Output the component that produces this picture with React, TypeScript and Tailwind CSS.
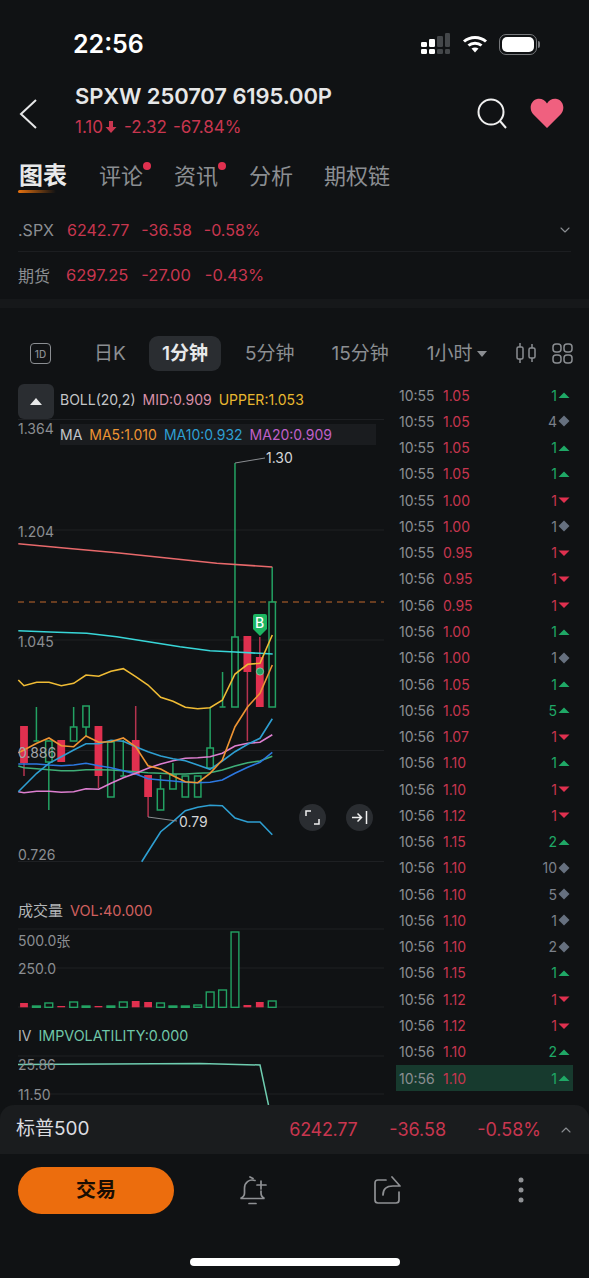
import { ChevronDown, ChevronUp } from "lucide-react";

const RED = "#e0304f";
const GREEN = "#23a263";

// x is the bar slot, the rest are y values on the page
const candles = [
  { up: false, top: 726, bottom: 763, high: 726, low: 776 },
  { up: true, top: 741, bottom: 741, high: 707, low: 741 },
  { up: true, top: 741, bottom: 762, high: 741, low: 810 },
  { up: false, top: 740, bottom: 762, high: 740, low: 762 },
  { up: true, top: 727, bottom: 741, high: 707, low: 741 },
  { up: true, top: 706, bottom: 727, high: 706, low: 736 },
  { up: false, top: 726, bottom: 776, high: 726, low: 788 },
  { up: true, top: 742, bottom: 797, high: 742, low: 797 },
  { up: true, top: 776, bottom: 776, high: 740, low: 776 },
  { up: false, top: 740, bottom: 775, high: 706, low: 775 },
  { up: false, top: 775, bottom: 797, high: 775, low: 817 },
  { up: true, top: 789, bottom: 810, high: 775, low: 810 },
  { up: true, top: 775, bottom: 789, high: 763, low: 789 },
  { up: true, top: 776, bottom: 797, high: 776, low: 797 },
  { up: true, top: 776, bottom: 797, high: 776, low: 797 },
  { up: true, top: 748, bottom: 768, high: 707, low: 768 },
  { up: true, top: 707, bottom: 707, high: 672, low: 707 },
  { up: true, top: 637, bottom: 707, high: 463, low: 707 },
  { up: false, top: 636, bottom: 672, high: 636, low: 741 },
  { up: false, top: 657, bottom: 707, high: 637, low: 707 },
  { up: true, top: 602, bottom: 707, high: 567, low: 707 },
];

const slotX = (i: number) => 24 + i * 12.41;

const volumes = [
  [1003, false], [1006, true], [1003, true], [1006, false], [1002, true], [1006, true], [1006, false],
  [1006, true], [1002, true], [1001, false], [1002, false], [1003, true], [1006, true], [1006, true],
  [1005, true], [992, true], [990, true], [932, true], [1005, false], [1002, false], [1001, true],
] as [number, boolean][];

const line = (pts: number[][], ox = 600) => pts.map(([x, y]) => `${(x / 3).toFixed(1)},${(ox + y / 3).toFixed(1)}`).join(" ");

const cyan = [[55, 92], [150, 96], [260, 100], [350, 110], [450, 126], [540, 140], [630, 152], [705, 156], [780, 160], [818, 162]];
const yellow = [[55, 240], [72, 257], [110, 247], [147, 247], [184, 257], [221, 250], [258, 225], [296, 229], [333, 214], [370, 206], [407, 230], [444, 255], [482, 292], [519, 304], [556, 322], [593, 326], [630, 323], [667, 301], [705, 222], [743, 193], [780, 190], [817, 105]];
const orange = [[55, 458], [72, 450], [110, 430], [147, 414], [184, 437], [221, 440], [258, 408], [296, 427], [333, 425], [370, 414], [407, 440], [444, 497], [482, 507], [519, 527], [556, 545], [593, 548], [630, 520], [667, 480], [705, 380], [743, 320], [780, 280], [817, 195]];
const sky = [[55, 575], [110, 520], [147, 490], [184, 470], [221, 450], [258, 431], [296, 431], [333, 421], [370, 424], [407, 440], [444, 455], [482, 468], [519, 476], [556, 482], [593, 495], [630, 508], [667, 483], [705, 455], [743, 433], [780, 415], [817, 356]];
const pink = [[55, 575], [72, 578], [110, 574], [147, 574], [184, 577], [221, 575], [258, 566], [296, 568], [333, 550], [370, 533], [407, 520], [444, 505], [482, 492], [519, 482], [556, 475], [593, 473], [630, 470], [667, 460], [705, 438], [743, 430], [780, 427], [817, 404]];
const blue = [[55, 492], [110, 492], [147, 495], [184, 497], [221, 495], [258, 490], [296, 497], [333, 503], [370, 512], [407, 522], [444, 536], [482, 540], [519, 543], [556, 547], [593, 548], [630, 547], [667, 540], [705, 520], [743, 502], [780, 487], [817, 457]];
const green = [[55, 498], [72, 503], [110, 506], [147, 509], [184, 512], [221, 512], [258, 509], [296, 509], [333, 510], [370, 512], [407, 515], [444, 518], [482, 520], [519, 522], [556, 522], [593, 520], [630, 518], [667, 510], [705, 498], [743, 488], [780, 483], [817, 469]];
const lower = [[425, 785], [444, 755], [482, 695], [519, 665], [556, 632], [593, 622], [630, 616], [667, 617], [705, 654], [743, 666], [780, 666], [817, 704]];
const upper = [[55, 671], [200, 685], [350, 698], [500, 714], [650, 730], [817, 741]];

const ticks: [string, string, number, "up" | "down" | "flat"][] = [
  ["10:55", "1.05", 1, "up"],
  ["10:55", "1.05", 4, "flat"],
  ["10:55", "1.05", 1, "up"],
  ["10:55", "1.05", 1, "up"],
  ["10:55", "1.00", 1, "down"],
  ["10:55", "1.00", 1, "flat"],
  ["10:55", "0.95", 1, "down"],
  ["10:56", "0.95", 1, "down"],
  ["10:56", "0.95", 1, "down"],
  ["10:56", "1.00", 1, "up"],
  ["10:56", "1.00", 1, "flat"],
  ["10:56", "1.05", 1, "up"],
  ["10:56", "1.05", 5, "up"],
  ["10:56", "1.07", 1, "down"],
  ["10:56", "1.10", 1, "up"],
  ["10:56", "1.10", 1, "down"],
  ["10:56", "1.12", 1, "down"],
  ["10:56", "1.15", 2, "up"],
  ["10:56", "1.10", 10, "flat"],
  ["10:56", "1.10", 5, "flat"],
  ["10:56", "1.10", 1, "flat"],
  ["10:56", "1.10", 2, "flat"],
  ["10:56", "1.15", 1, "up"],
  ["10:56", "1.12", 1, "down"],
  ["10:56", "1.12", 1, "down"],
  ["10:56", "1.10", 2, "up"],
  ["10:56", "1.10", 1, "up"],
];

function TickMark({ dir }: { dir: "up" | "down" | "flat" }) {
  return (
    <svg width="12" height="12" viewBox="0 0 12 12" className="ml-[1px] shrink-0">
      {dir === "up" && <path d="M0.5 9 L6 3.5 L11.5 9 Z" fill="#1fa866" />}
      {dir === "down" && <path d="M0.5 3.5 L6 9 L11.5 3.5 Z" fill={RED} />}
      {dir === "flat" && <path d="M6 0.5 L11.5 6 L6 11.5 L0.5 6 Z" fill="#66707f" />}
    </svg>
  );
}

function Chart() {
  const gridY = [419.5, 530, 640, 750.5, 861.5, 929, 968, 1007, 1056, 1094];
  return (
    <svg viewBox="0 384 395 721" className="absolute inset-0 h-full w-full" fill="none">
      {gridY.map((y) => (
        <line key={y} x1="18" x2="384" y1={y} y2={y} stroke="#1e2023" strokeWidth="1" />
      ))}
      <line x1="18" x2="384" y1="602" y2="602" stroke="#c2682c" strokeWidth="1.2" strokeDasharray="6 5" />

      {candles.map((c, i) => {
        const x = slotX(i);
        const isLine = c.top === c.bottom;
        return (
          <g key={i}>
            <line x1={x} x2={x} y1={c.high} y2={c.low} stroke={c.up ? GREEN : "#b5334f"} strokeWidth="1.5" />
            {isLine ? (
              <line x1={x - 3} x2={x + 3} y1={c.bottom} y2={c.bottom} stroke={GREEN} strokeWidth="1.5" />
            ) : c.up ? (
              <rect x={x - 3.2} y={c.top} width="6.4" height={c.bottom - c.top} fill="#101214" stroke={GREEN} strokeWidth="1.5" />
            ) : (
              <rect x={x - 3.9} y={c.top} width="7.8" height={c.bottom - c.top} fill={RED} />
            )}
          </g>
        );
      })}

      <polyline points={line(upper, 320)} stroke="#e8696b" strokeWidth="1.6" />
      <polyline points={line(cyan)} stroke="#38d6d8" strokeWidth="1.6" />
      <polyline points={line(yellow)} stroke="#f0bc35" strokeWidth="1.6" />
      <polyline points={line(green)} stroke="#3fae78" strokeWidth="1.6" />
      <polyline points={line(blue)} stroke="#2c78e0" strokeWidth="1.6" />
      <polyline points={line(pink)} stroke="#dd7fd0" strokeWidth="1.6" />
      <polyline points={line(sky)} stroke="#2e9fd2" strokeWidth="1.6" />
      <polyline points={line(orange)} stroke="#ee9433" strokeWidth="1.6" />
      <polyline points={line(lower)} stroke="#2e9fd2" strokeWidth="1.6" />

      {/* high / low leaders */}
      <polyline points="235,463 265,458" stroke="#8a8d91" strokeWidth="1" />
      <polyline points="148,817 177,821" stroke="#8a8d91" strokeWidth="1" />

      {/* buy marker */}
      <path d="M255 614 H265 Q267 614 267 616 V629 L260 636 L253 629 V616 Q253 614 255 614 Z" fill="#1db562" />
      <circle cx="260" cy="671.5" r="3.6" fill={GREEN} stroke="#7fd6a8" strokeWidth="0.8" />

      {/* volume */}
      {volumes.map(([top, up], i) => {
        const x = slotX(i);
        return up ? (
          <rect key={i} x={x - 3.9} y={top} width="7.8" height={1007.3 - top} fill="#101214" stroke={GREEN} strokeWidth="1.4" />
        ) : (
          <rect key={i} x={x - 3.9} y={top} width="7.8" height={1007.3 - top} fill={RED} />
        );
      })}

      {/* iv */}
      <polyline points="18,1064.500 110,1064 200,1063.500 260,1065 268.500,1105" stroke="#6fcdb0" strokeWidth="1.5" />
    </svg>
  );
}

export default function App() {
  return (
    <div className="flex h-[1278px] w-[589px] flex-col overflow-hidden bg-[#101214] font-['Inter','Noto_Sans_CJK_SC',sans-serif] text-[#8b8e92]">
      {/* Status bar */}
      <div className="flex h-[72px] items-center justify-between pl-[73px] pr-[49px] pt-[16px]">
        <span className="text-[25px] font-semibold leading-none text-white">22:56</span>
        <div className="flex items-center gap-[11px]">
          <svg width="30" height="22" viewBox="0 0 30 22">
            <rect x="0" y="9" width="6" height="5" rx="1.2" fill="#fff" />
            <rect x="0" y="16" width="6" height="5" rx="1.2" fill="#fff" />
            <rect x="8" y="6" width="6" height="8" rx="1.2" fill="#fff" />
            <rect x="8" y="16" width="6" height="5" rx="1.2" fill="#fff" />
            <rect x="16" y="3" width="6" height="11" rx="1.2" fill="#44474a" />
            <rect x="16" y="16" width="6" height="5" rx="1.2" fill="#44474a" />
            <rect x="24" y="0" width="5" height="14" rx="1.2" fill="#44474a" />
            <rect x="24" y="16" width="5" height="5" rx="1.2" fill="#44474a" />
          </svg>
          <svg width="26" height="20" viewBox="0 0 26 20" fill="none" stroke="#fff" strokeWidth="3">
            <path d="M2 7.5 C8 2 18 2 24 7.5" />
            <path d="M6.5 11.5 C10 8.4 16 8.4 19.5 11.5" />
            <path d="M13 18.5 L9.5 14.6 C11.5 13.2 14.5 13.2 16.5 14.6 Z" fill="#fff" stroke="none" />
          </svg>
          <div className="flex items-center">
            <div className="h-[21px] w-[38px] rounded-[7px] border border-[#77797c] p-[2px]">
              <div className="h-full w-full rounded-[5px] bg-white" />
            </div>
            <div className="ml-[1px] h-[7px] w-[2px] rounded-r bg-[#77797c]" />
          </div>
        </div>
      </div>

      {/* Header */}
      <div className="flex h-[80px] items-center pl-[19px] pr-[25px]">
        <svg width="18" height="30" viewBox="0 0 18 30" fill="none" stroke="#e6e7e8" strokeWidth="2" className="mt-[3px]">
          <path d="M17 1 L2 15 L17 29" />
        </svg>
        <div className="ml-[38px] flex flex-1 flex-col gap-[10px] self-start pt-[12px]">
          <span className="text-[22px] font-semibold leading-[24px] tracking-[-0.1px] text-[#e6e7e8]">SPXW 250707 6195.00P</span>
          <div className="flex items-center text-[17px] leading-[18px] text-[#c8364f]">
            <span>1.10</span>
            <svg width="12" height="14" viewBox="0 0 12 14" className="ml-[2px] mr-[7px]">
              <path d="M4 1 H8 V7 H11.5 L6 13 L0.5 7 H4 Z" fill="#c8364f" />
            </svg>
            <span className="mr-[6px]">-2.32</span>
            <span>-67.84%</span>
          </div>
        </div>
        <svg width="30" height="32" viewBox="0 0 30 32" fill="none" stroke="#f0f0f0" strokeWidth="2" className="mt-[3px]">
          <circle cx="14" cy="14" r="12.5" />
          <path d="M23 23 L29 30" />
        </svg>
        <svg width="34" height="30" viewBox="0 0 34 30" className="ml-[23px] mt-[2px]">
          <path d="M17 30 L3 16 C-1 11.500 0 3 7 1 C11 0 15 2 17 5.500 C19 2 23 0 27 1 C34 3 35 11.500 31 16 Z" fill="#f0607f" />
        </svg>
      </div>

      {/* Tabs */}
      <div className="flex h-[53px] items-start pl-[19px] pt-[8px] text-[22px] leading-[32px]">
        <div className="relative mr-[32px] text-[24px] font-bold text-[#e8e9ea]">
          图表
          <div className="absolute left-[-1px] top-[30px] h-[3px] w-[38px] rounded-full bg-gradient-to-r from-[#e8720f] to-transparent" />
        </div>
        <div className="relative mr-[31px]">
          评论
          <div className="absolute right-[-8px] top-[2px] h-[8px] w-[8px] rounded-full bg-[#e0304f]" />
        </div>
        <div className="relative mr-[31px]">
          资讯
          <div className="absolute right-[-8px] top-[2px] h-[8px] w-[8px] rounded-full bg-[#e0304f]" />
        </div>
        <div className="mr-[31px]">分析</div>
        <div>期权链</div>
      </div>

      {/* Index rows */}
      <div className="px-[18px] text-[16px]">
        <div className="flex h-[47px] items-center border-b border-[#1c1e21] pt-[3px]">
          <span className="w-[49px]">.SPX</span>
          <span className="mr-[12px] text-[#c8364f]">6242.77</span>
          <span className="mr-[12px] text-[#c8364f]">-36.58</span>
          <span className="flex-1 text-[#c8364f]">-0.58%</span>
          <ChevronDown size={16} strokeWidth={1.6} className="mr-[-2px] text-[#8b8e92]" />
        </div>
        <div className="flex h-[47px] items-center text-[16.5px]">
          <span className="w-[48px] text-[16px]">期货</span>
          <span className="mr-[13px] text-[#c8364f]">6297.25</span>
          <span className="mr-[14px] text-[#c8364f]">-27.00</span>
          <span className="text-[#c8364f]">-0.43%</span>
        </div>
      </div>
      <div className="h-[9px] bg-[#16181a]" />

      {/* Period selector */}
      <div className="flex h-[76px] items-start pl-[30px] pt-[28px] text-[19px] leading-[35px]">
        <div className="mt-[7px] flex h-[21px] w-[21px] items-center justify-center rounded-[4px] border border-[#8b8e92] text-[10px] font-medium leading-none">
          1D
        </div>
        <span className="ml-[43px] w-[55px]">日K</span>
        <span className="flex h-[35px] w-[72px] items-center justify-center rounded-[9px] bg-[#2a2d31] font-semibold text-[#e8e9ea]">1分钟</span>
        <span className="ml-[24px]">5分钟</span>
        <span className="ml-[37px]">15分钟</span>
        <span className="ml-[38px]">1小时</span>
        <svg width="10" height="6" viewBox="0 0 10 6" className="ml-[4px] mt-[15px]">
          <path d="M0 0 H10 L5 6 Z" fill="#8b8e92" />
        </svg>
        <svg width="20" height="22" viewBox="0 0 20 22" fill="none" stroke="#8b8e92" strokeWidth="1.5" className="ml-[29px] mt-[6px]">
          <rect x="1" y="5" width="6" height="12" rx="1.5" />
          <path d="M4 1 V5 M4 17 V21" />
          <rect x="13" y="6" width="6" height="10" rx="1.5" />
          <path d="M16 2 V6 M16 16 V20" />
        </svg>
        <svg width="21" height="21" viewBox="0 0 21 21" fill="none" stroke="#8b8e92" strokeWidth="1.5" className="ml-[16px] mt-[7px]">
          <rect x="1" y="1" width="8" height="8" rx="3" />
          <rect x="12" y="1" width="8" height="8" rx="3" />
          <rect x="1" y="12" width="8" height="8" rx="3" />
          <rect x="12" y="12" width="8" height="8" rx="3" />
        </svg>
      </div>

      {/* Chart + tick list */}
      <div className="flex h-[721px] overflow-hidden">
        <div className="relative h-full w-[395px] shrink-0 text-[14px] leading-[14px]">
          <Chart />

          <div className="absolute left-[18px] top-0 flex h-[35px] w-[36px] items-center justify-center rounded-md bg-[#2a2d31]">
            <svg width="12" height="7" viewBox="0 0 12 7">
              <path d="M6 0 L12 7 H0 Z" fill="#e8e9ea" />
            </svg>
          </div>
          <div className="absolute left-[60px] top-[9px] flex gap-[7px]">
            <span className="text-[#c4c6c8]">BOLL(20,2)</span>
            <span className="text-[#d98fa8]">MID:0.909</span>
            <span className="text-[#e8b830]">UPPER:1.053</span>
          </div>
          <div className="absolute left-[60px] top-[40px] flex h-[21px] w-[316px] items-center gap-[7px] bg-[#1a1c1f]">
            <span className="text-[#c4c6c8]">MA</span>
            <span className="text-[#ee9433]">MA5:1.010</span>
            <span className="text-[#2e9fd2]">MA10:0.932</span>
            <span className="text-[#c060c8]">MA20:0.909</span>
          </div>

          <span className="absolute left-[18px] top-[38px]">1.364</span>
          <span className="absolute left-[18px] top-[141px]">1.204</span>
          <span className="absolute left-[18px] top-[251px]">1.045</span>
          <span className="absolute left-[18px] top-[362px] text-[#a4a6a9]">0.886</span>
          <span className="absolute left-[18px] top-[464px]">0.726</span>
          <span className="absolute left-[266px] top-[67px] text-[#d4d5d7]">1.30</span>
          <span className="absolute left-[179px] top-[431px] text-[#d4d5d7]">0.79</span>
          <span className="absolute left-[255px] top-[232px] text-[14px] font-medium leading-[14px] text-white">B</span>

          <div className="absolute left-[299px] top-[420px] flex h-[27px] w-[27px] items-center justify-center rounded-full bg-[#2a2d31]">
            <svg width="15" height="15" viewBox="0 0 15 15" fill="none" stroke="#f0f0f0" strokeWidth="1.5">
              <path d="M1 6 V1 H6 M14 9 V14 H9" />
            </svg>
          </div>
          <div className="absolute left-[346px] top-[420px] flex h-[27px] w-[27px] items-center justify-center rounded-full bg-[#2a2d31]">
            <svg width="17" height="15" viewBox="0 0 17 15" fill="none" stroke="#f0f0f0" strokeWidth="1.5">
              <path d="M1 7.500 H10 M6.500 3.500 L10.500 7.500 L6.500 11.500 M15.500 1 V14" />
            </svg>
          </div>

          <div className="absolute left-[18px] top-[520px] flex items-center gap-[7px]">
            <span className="text-[15px] text-[#b4b6b8]">成交量</span>
            <span className="text-[14.5px] text-[#d0605f]">VOL:40.000</span>
          </div>
          <span className="absolute left-[18px] top-[550px]">500.0张</span>
          <span className="absolute left-[18px] top-[578px]">250.0</span>
          <div className="absolute left-[18px] top-[645px] flex gap-[7px]">
            <span className="text-[#b4b6b8]">IV</span>
            <span className="text-[14.3px] text-[#6fc7a8]">IMPVOLATILITY:0.000</span>
          </div>
          <span className="absolute left-[18px] top-[674px]">25.86</span>
          <span className="absolute left-[18px] top-[704px]">11.50</span>
        </div>

        <div className="mt-[-2px] flex-1 pl-px pr-[16px] text-[14px]">
          {ticks.map(([time, price, qty, dir], i) => (
            <div key={i} className={`flex h-[26.27px] items-center pl-[3px] pr-[3px] ${i === ticks.length - 1 ? "bg-[#173a2e]" : ""}`}>
              <span className="w-[44px]">{time}</span>
              <span className="flex-1 text-[#c8364f]">{price}</span>
              <span className={dir === "up" ? "text-[#1fa866]" : dir === "down" ? "text-[#c8364f]" : "text-[#7b808a]"}>{qty}</span>
              <TickMark dir={dir} />
            </div>
          ))}
        </div>
      </div>

      {/* Index bar */}
      <div className="flex h-[49px] items-center rounded-t-[14px] bg-[#1a1c1e] pl-[16px] pr-[15px] text-[18px]">
        <span className="flex-1 text-[19px] text-[#dcdde0]">标普500</span>
        <span className="mr-[32px] tracking-[-0.3px] text-[#c8364f]">6242.77</span>
        <span className="mr-[31px] text-[#c8364f]">-36.58</span>
        <span className="mr-[17px] text-[#c8364f]">-0.58%</span>
        <ChevronUp size={16} strokeWidth={1.6} />
      </div>

      {/* Bottom actions */}
      <div className="flex h-[72px] items-center pl-[18px]">
        <div className="flex h-[47px] w-[156px] items-center justify-center rounded-full bg-[#ec6d0d] text-[20px] font-semibold text-[#1a0d02]">交易</div>
        <svg width="28" height="29" viewBox="0 0 28 29" fill="none" stroke="#8f9194" strokeWidth="1.7" strokeLinecap="round" className="ml-[65px]">
          <path d="M16 4.500 C10 2.500 5.500 7 5.500 12 V17 C5.500 20 3.500 21.500 1.500 22.500 H25.500 C23.500 21.500 22 20 22 17 V15" />
          <path d="M11 1 L14 2.500 M10 27.500 H17" />
          <path d="M22 5 V13 M18 9 H27" />
        </svg>
        <svg width="27" height="28" viewBox="0 0 27 28" fill="none" stroke="#8f9194" strokeWidth="1.7" strokeLinecap="round" strokeLinejoin="round" className="ml-[107px]">
          <path d="M12 4 H4 Q1 4 1 7 V24 Q1 27 4 27 H22 Q25 27 25 24 V16" />
          <path d="M9 19 C9 13 13 10 19 10 H26 L18 1" />
        </svg>
        <svg width="6" height="26" viewBox="0 0 6 26" fill="#8f9194" className="ml-[117px]">
          <circle cx="3" cy="3" r="2.5" />
          <circle cx="3" cy="13" r="2.5" />
          <circle cx="3" cy="23" r="2.5" />
        </svg>
      </div>

      {/* Home indicator */}
      <div className="flex flex-1 justify-center pt-[32px]">
        <div className="h-[8px] w-[210px] rounded-full bg-white" />
      </div>
    </div>
  );
}
